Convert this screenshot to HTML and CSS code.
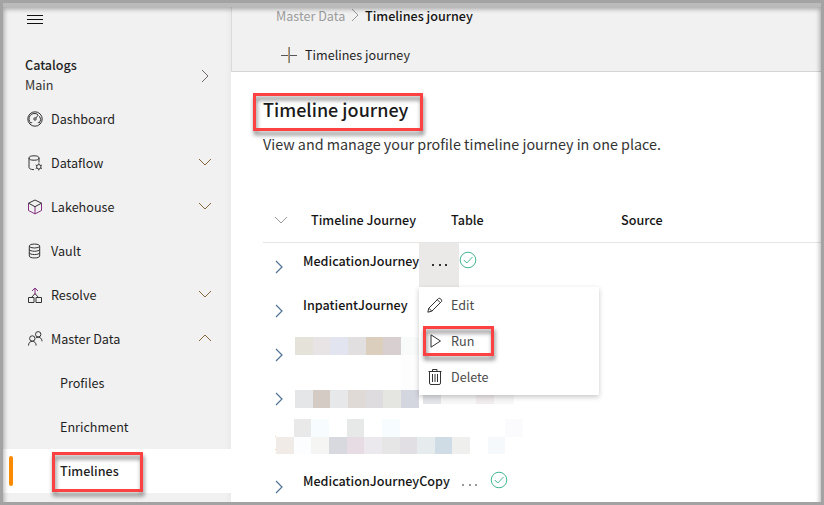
FILE: index.html
```html
<!DOCTYPE html>
<html lang="en">
<head>
<meta charset="utf-8">
<title>Timelines journey</title>
<link rel="stylesheet" href="styles.css">
</head>
<body>
<div class="window">
  <nav class="sidebar">
    <div class="menu-toggle"><svg width="16" height="11" viewBox="0 0 16 11"><path d="M0 1.5h16M0 5.5h16M0 9.5h16"/></svg></div>
    <div class="catalog">
      <div><div class="catalog-title">Catalogs</div><div class="catalog-name">Main</div></div>
      <svg class="catalog-arrow" width="8" height="14" viewBox="0 0 8 14"><path d="M1 1l6 6-6 6"/></svg>
    </div>
    <a class="item"><svg class="icon" viewBox="0 0 16 16"><circle cx="8" cy="8" r="7.2"/><path d="M4 12.2A5.3 5.3 0 0 1 11 3.700M12.500 5.200a5.300 5.300 0 0 1-.4 6.900M8.800 7l2.600-3M4 12.200l1-1M12 12.200l-1-1"/><circle cx="8" cy="8" r="1.200"/></svg><span>Dashboard</span></a>
    <a class="item"><svg class="icon" viewBox="0 0 16 16"><ellipse cx="7" cy="3" rx="5" ry="2.200"/><path d="M2 3v9.500c0 1 1.500 2 5 2.200M12 3v4.500"/><circle cx="11.800" cy="11.800" r="2.200"/><path d="M11.800 8.300v1.300M11.800 14v1.400M8.700 10l1.200.7M13.700 12.900l1.200.7M8.700 13.600l1.200-.7M13.700 10.700l1.200-.7"/></svg><span>Dataflow</span><svg class="chev" viewBox="0 0 14 8"><path d="M1 1l6 6 6-6"/></svg></a>
    <a class="item"><svg class="icon" viewBox="0 0 16 16"><path class="edge" d="M1.500 4.200v7.300L8 14.900l6.500-3.400V4.200M8 7.700v7.200"/><path d="M1.500 4.200L8 1l6.500 3.200L8 7.700z"/></svg><span>Lakehouse</span><svg class="chev" viewBox="0 0 14 8"><path d="M1 1l6 6 6-6"/></svg></a>
    <a class="item"><svg class="icon" viewBox="0 0 16 16"><ellipse cx="7.500" cy="3" rx="5.200" ry="2"/><path d="M2.300 3v10c0 2.600 10.400 2.600 10.400 0V3M2.300 6.300c0 2.600 10.400 2.600 10.400 0M2.300 9.600c0 2.600 10.400 2.600 10.400 0"/></svg><span>Vault</span></a>
    <a class="item"><svg class="icon" viewBox="0 0 16 16"><path d="M1.500 10.500H7v5H1.500zM9 10.500h5.500v5H9zM4.500 10.500L8 6.500l3.500 4"/><path class="edge" d="M8 8V1.500M5 4l3-3 3 3"/></svg><span>Resolve</span><svg class="chev" viewBox="0 0 14 8"><path d="M1 1l6 6 6-6"/></svg></a>
    <a class="item"><svg class="icon" viewBox="0 0 16 16"><circle cx="5.300" cy="7.500" r="2.700"/><circle cx="11.200" cy="3.300" r="2.700"/><path d="M1.500 14.500c0-5.700 7.600-5.700 7.600 0M8.800 7c3-2 6.200 0 6.200 3.300"/></svg><span>Master Data</span><svg class="chev" viewBox="0 0 14 8"><path d="M1 7l6-6 6 6"/></svg></a>
    <a class="item sub">Profiles</a>
    <a class="item sub">Enrichment</a>
    <a class="item sub active">Timelines<span class="mark mark-nav"></span></a>
  </nav>
  <main class="main">
    <header class="topbar">
      <div class="crumbs"><span class="crumb-parent">Master Data</span><svg width="8" height="14" viewBox="0 0 8 14"><path d="M1 1l6 6-6 6"/></svg><span class="strong">Timelines journey</span></div>
      <div class="toolbar"><svg width="16" height="16" viewBox="0 0 16 16"><path class="across" d="M0 8.500h16"/><path class="upright" d="M7.500 0v16"/><path class="upright-edge" d="M8.500 0v16"/></svg><span>Timelines journey</span></div>
    </header>
    <section class="intro">
      <h1>Timeline journey<span class="mark mark-title"></span></h1>
      <p>View and manage your profile timeline journey in one place.</p>
    </section>
    <section class="table">
      <div class="thead strong"><svg width="14" height="8" viewBox="0 0 14 8"><path d="M1 1l6 6 6-6"/></svg><span class="col-journey">Timeline Journey</span><span class="col-table">Table</span><span>Source</span></div>
      <div class="row"><svg class="expand" viewBox="0 0 8 14"><path d="M1 1l6 6-6 6"/></svg><span class="name strong name-open">MedicationJourney</span>
        <div class="more open"><svg width="18" height="4" viewBox="0 0 18 4"><path d="M1 1h2v2H1zM8 1h2v2H8zM14 1h2v2h-2z"/></svg>
          <div class="menu">
            <div class="option"><svg viewBox="0 0 16 16"><path d="M.8 15.200l1-4L11.500 1.500c1.200-1.200 4.200 1.800 3 3L4.800 14.200zM1.800 11.200l3 3M10.300 2.700l3 3"/></svg><span>Edit</span></div>
            <div class="option"><svg viewBox="0 0 16 16"><path d="M4 1.800v12.400L13.500 8z"/></svg><span>Run</span><span class="mark mark-run"></span></div>
            <div class="option"><svg viewBox="0 0 16 16"><path d="M1.500 2.500h13M5.500 2.500v-2H10v2M2.500 2.500V14q0 1.500 1.500 1.500h8q1.500 0 1.500-1.500V2.500M5.500 5v8M8 5v8M10.500 5v8"/></svg><span>Delete</span></div>
          </div>
        </div>
        <svg class="ok" viewBox="0 0 18 18"><circle cx="9" cy="9" r="7.800"/><path d="M4.800 9l3 3 5.700-6"/></svg></div>
      <div class="row"><svg class="expand" viewBox="0 0 8 14"><path d="M1 1l6 6-6 6"/></svg><span class="name strong">InpatientJourney</span></div>
      <div class="row"><svg class="expand" viewBox="0 0 8 14"><path d="M1 1l6 6-6 6"/></svg>
        <svg class="redacted" width="124" height="44" viewBox="295 331 124 44"><path fill="#e5e2da" d="M295 337h18v18h-18z"/><path fill="#e8e4e6" d="M313 337h17v18h-17z"/><path fill="#e2e5ef" d="M330 337h18v18h-18z"/><path fill="#e2dfe1" d="M348 337h18v18h-18z"/><path fill="#dccebc" d="M366 337h17v18h-17z"/><path fill="#d8cfd1" d="M383 337h18v18h-18z"/><path fill="#f9fbfb" d="M401 337h18v18h-18z"/><path fill="#fdfdfe" d="M401 355h18v20h-18z"/></svg></div>
      <div class="row"><svg class="expand" viewBox="0 0 8 14"><path d="M1 1l6 6-6 6"/></svg>
        <svg class="redacted" width="220" height="44" viewBox="295 375 220 44"><path fill="#e5e6e7" d="M295 390h18v18h-18z"/><path fill="#d5cbc5" d="M313 390h17v18h-17z"/><path fill="#e6e8ea" d="M330 390h18v18h-18z"/><path fill="#dfdad6" d="M348 390h18v18h-18z"/><path fill="#dfdce0" d="M366 390h17v18h-17z"/><path fill="#e5e6e2" d="M383 390h18v18h-18z"/><path fill="#d3d6df" d="M401 390h18v18h-18z"/><path fill="#fdfdfe" d="M401 375h18v15h-18z"/><path fill="#e3e4e9" d="M423 395h18v9h-18z"/><path fill="#f7f7f8" d="M441 395h73v9h-73z"/><path fill="#f0ebed" d="M476 395h18v9h-18z"/></svg></div>
      <div class="row">
        <svg class="redacted wide" width="250" height="44" viewBox="275 419 250 44"><path fill="#f5cfa5" d="M275 436h1v1h-1zM275 449h1v1h-1z"/><path fill="#e9e9e9" d="M294 419h17v18h-17z"/><path fill="#f7fcff" d="M311 419h18v18h-18zM382 419h18v18h-18z"/><path fill="#e7e9e8" d="M347 419h17v18h-17z"/><path fill="#fbfbfd" d="M505 419h18v18h-18z"/><path fill="#f1ebe7" d="M276 437h18v17h-18z"/><path fill="#fcfdff" d="M294 437h17v17h-17z"/><path fill="#f5f6f4" d="M311 437h18v17h-18z"/><path fill="#d8d9df" d="M329 437h18v17h-18z"/><path fill="#e7dce3" d="M347 437h17v17h-17z"/><path fill="#ebe9ed" d="M364 437h18v17h-18z"/><path fill="#e6e6e7" d="M382 437h18v17h-18z"/><path fill="#e1dfe3" d="M400 437h17v17h-17z"/><path fill="#e6ecee" d="M417 437h18v17h-18z"/><path fill="#cfdce6" d="M435 437h17v17h-17z"/><path fill="#efefee" d="M452 437h18v17h-18z"/><path fill="#f5f9fc" d="M488 437h17v17h-17z"/></svg></div>
      <div class="row"><svg class="expand" viewBox="0 0 8 14"><path d="M1 1l6 6-6 6"/></svg><span class="name strong name-copy">MedicationJourneyCopy</span>
        <div class="more"><svg width="18" height="4" viewBox="0 0 18 4"><path d="M1 1h2v2H1zM8 1h2v2H8zM14 1h2v2h-2z"/></svg></div>
        <svg class="ok" viewBox="0 0 18 18"><circle cx="9" cy="9" r="7.800"/><path d="M4.800 9l3 3 5.700-6"/></svg></div>
    </section>
  </main>
  <div class="frame"></div>
</div>
</body>
</html>
```
FILE: styles.css
```css
* { box-sizing: border-box; }
body { margin: 0; font: 12.6px/20px "Noto Sans CJK SC", sans-serif; color: #1f1f1f; overflow: hidden; }
svg { display: block; flex: none; fill: none; stroke: #333; }
.window { position: relative; display: flex; width: 824px; height: 505px; padding: 3px; background: #fff; overflow: hidden; }
.frame { position: absolute; inset: 0; border: 3px solid #a3a3a3; overflow: hidden; pointer-events: none; }
.frame::after { content: ""; position: absolute; inset: 0; bottom: -8px; border-top: 4px solid #bababa; box-shadow: inset 0 1px 5px 1px rgba(0,0,0,.32); }
.strong { font-weight: 500; color: #151515; }

.sidebar { width: 228px; flex: none; background: linear-gradient(90deg, #f1f1f1 222px, #ebebeb 228px); }
.menu-toggle { height: 48px; padding: 11px 0 0 24px; }
.menu-toggle svg { stroke: #111; }
.catalog { display: flex; justify-content: space-between; height: 46px; padding: 4px 22px 0 22px; }
.catalog-title { font-weight: 500; }
.catalog-name { color: #333; }
.catalog-arrow { margin-top: 14px; stroke: #766868; }
.item { position: relative; display: flex; align-items: center; height: 44px; padding: 0 19px 0 24px; }
.icon { width: 16px; height: 16px; margin-right: 8px; stroke-width: 1; }
.edge { stroke: #822f83; }
.chev { width: 14px; height: 8px; margin: -3px 0 0 auto; stroke: #86653a; }
.sub { padding-left: 57px; }
.active { background: #fff; font-weight: 500; }
.active::before { content: ""; position: absolute; left: 6px; top: 7px; width: 4px; height: 30px; border-radius: 2px; background: #fa8b00; }

.mark { position: absolute; border: 3px solid #fb4141; filter: drop-shadow(1px 4px 2px rgba(0,0,0,.5)); }
.mark-nav { left: 49px; top: 3px; width: 91px; height: 40px; }
.mark-title { left: -10px; top: -3px; width: 170px; height: 38px; }
.mark-run { left: 4px; top: 3px; width: 71px; height: 30px; }

.main { flex: 1; min-width: 0; }
.topbar { height: 69px; padding: 3px 0 0 44px; background: #f1f1f1; border-left: 1px solid #dadada; border-bottom: 1px solid #d5d5d5; }
.crumbs { display: flex; align-items: center; height: 20px; }
.crumb-parent { width: 69px; margin-right: 6px; color: #9b9b9b; white-space: nowrap; }
.crumbs svg { margin: -2px 6px 0 0; stroke: #999; }
.toolbar { display: flex; align-items: center; gap: 8px; height: 20px; margin: 19px 0 0 5px; }
.upright { stroke: #cf9c64; }
.upright-edge { stroke: #71899f; }
.across { stroke: #555; }
.intro { height: 126px; padding: 25px 0 0 32px; }
h1 { position: relative; margin: -1px 0 0; font-size: 18px; font-weight: 500; line-height: 26px; height: 26px; color: #1a1a1a; }
.intro p { margin: 12px 0 0; font-size: 14.32px; line-height: 20px; color: #333; }

.table { margin-left: 32px; }
.thead { display: flex; align-items: center; height: 45px; padding-left: 11px; border-bottom: 1px solid #e5e5e5; }
.thead svg { margin-right: 23px; stroke: #999; }
.col-journey { width: 140px; }
.col-table { width: 170px; }
.row { display: flex; height: 44px; padding-left: 12px; }
.expand { width: 8px; height: 14px; margin: 17px 20px 0 0; stroke: #4f7396; stroke-width: 1.2; }
.name { margin-top: 8px; white-space: nowrap; }
.name-open { width: 116px; }
.name-copy { width: 147px; }
.more { position: relative; display: flex; justify-content: center; width: 40px; padding-top: 20px; }
.more > svg { fill: #999; stroke: none; }
.open { background: #ebe9e8; }
.open > svg { fill: #333; margin-left: 2px; }
.ok { width: 18px; height: 18px; margin: 8px 0 0 -.5px; stroke: #43b795; }
.redacted { margin-left: -8px; stroke: none; }
.wide { margin-left: 0; }
.menu { position: absolute; z-index: 2; left: 0; top: 44px; width: 180px; height: 108px; background: #fff; box-shadow: 0 2px 5px rgba(0,0,0,.22); }
.option { position: relative; display: flex; align-items: center; gap: 8px; height: 36px; padding-left: 8px; color: #4b4b4b; }
.option svg { width: 16px; height: 16px; stroke-width: 1; }
```
